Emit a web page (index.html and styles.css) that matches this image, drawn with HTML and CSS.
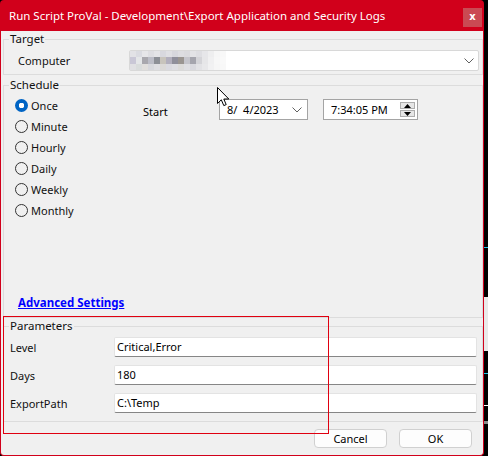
FILE: index.html
```html
<!DOCTYPE html>
<html>
<head>
<meta charset="utf-8">
<link rel="stylesheet" href="styles.css">
</head>
<body>
<div class="desktop">
  <div class="window">
    <div class="titlebar">
      <span class="title">Run Script ProVal - Development\Export Application and Security Logs</span>
      <div class="close">x</div>
    </div>
    <div class="client">
      <fieldset class="group target">
        <legend>Target</legend>
        <div class="target-row">
          <span class="lbl">Computer</span>
          <div class="combo">
            <div class="mosaic">
              <i style="background:#e2e2e6"></i><i style="background:#dadbe1"></i><i style="background:#e6e6e9"></i><i style="background:#dedee2"></i><i style="background:#e4e4e7"></i><i style="background:#d8d8de"></i><i style="background:#dfdfe3"></i><i style="background:#d7d7dd"></i><i style="background:#dddde1"></i><i style="background:#dadade"></i><i style="background:#e3e3e6"></i><i style="background:#dedee2"></i><i style="background:#e6e6e9"></i><i style="background:#eeeeef"></i><i style="background:#f6f6f6"></i><i style="background:#f8f8f8"></i>
              <i style="background:#c9c7d6"></i><i style="background:#e4e6e8"></i><i style="background:#a9a8ae"></i><i style="background:#bcbdc7"></i><i style="background:#8c8f96"></i><i style="background:#c8c4bc"></i><i style="background:#b2afbd"></i><i style="background:#8f8f9b"></i><i style="background:#9a9591"></i><i style="background:#c5c5cc"></i><i style="background:#a5a5ad"></i><i style="background:#d4d4d8"></i><i style="background:#e6e6e8"></i><i style="background:#f0f0f1"></i><i style="background:#f7f7f7"></i><i style="background:#f9f9f9"></i>
              <i style="background:#e0e0e3"></i><i style="background:#d9dcdc"></i><i style="background:#e1dfdd"></i><i style="background:#d7d8dd"></i><i style="background:#dedee2"></i><i style="background:#dbd9d7"></i><i style="background:#dadae0"></i><i style="background:#dedee3"></i><i style="background:#dcdbda"></i><i style="background:#dfdfe3"></i><i style="background:#d9d9de"></i><i style="background:#e2e2e5"></i><i style="background:#e8e8ea"></i><i style="background:#f1f1f2"></i><i style="background:#f6f6f6"></i><i style="background:#f8f8f8"></i>
            </div>
            <svg class="chev" width="10" height="6" viewBox="0 0 10 6"><path d="M0.5 0.5 L5 5 L9.5 0.5" fill="none" stroke="#606060" stroke-width="1"/></svg>
          </div>
        </div>
      </fieldset>

      <fieldset class="group schedule">
        <legend>Schedule</legend>
        <div class="sched-body">
          <div class="sched-top">
            <div class="radios">
              <div class="radio"><span class="dot checked"></span><span>Once</span></div>
              <div class="radio"><span class="dot"></span><span>Minute</span></div>
              <div class="radio"><span class="dot"></span><span>Hourly</span></div>
              <div class="radio"><span class="dot"></span><span>Daily</span></div>
              <div class="radio"><span class="dot"></span><span>Weekly</span></div>
              <div class="radio"><span class="dot"></span><span>Monthly</span></div>
            </div>
            <div class="start">
              <span class="start-lbl">Start</span>
              <div class="picker date">
                <span class="pick-text">8/&nbsp;&nbsp;4/2023</span>
                <svg class="chev" width="10" height="6" viewBox="0 0 10 6"><path d="M0.5 0.5 L5 5 L9.5 0.5" fill="none" stroke="#606060" stroke-width="1"/></svg>
              </div>
              <div class="picker time">
                <span class="pick-text">7:34:05 PM</span>
                <div class="spin">
                  <div class="spin-btn"><svg width="7" height="4" viewBox="0 0 7 4"><path d="M3.5 0 L7 4 L0 4 Z" fill="#000"/></svg></div>
                  <div class="spin-btn"><svg width="7" height="4" viewBox="0 0 7 4"><path d="M0 0 L7 0 L3.5 4 Z" fill="#000"/></svg></div>
                </div>
              </div>
            </div>
          </div>
          <a class="adv">Advanced Settings</a>
        </div>
      </fieldset>

      <fieldset class="group params">
        <legend>Parameters</legend>
        <div class="param-list">
          <div class="param"><span class="plbl">Level</span><div class="field">Critical,Error</div></div>
          <div class="param"><span class="plbl">Days</span><div class="field">180</div></div>
          <div class="param"><span class="plbl">ExportPath</span><div class="field">C:\Temp</div></div>
        </div>
      </fieldset>

      <div class="footer">
        <div class="btn">Cancel</div>
        <div class="btn">OK</div>
      </div>
    </div>
    <div class="annot"></div>
    <svg class="cursor" width="13" height="20" viewBox="0 0 13 20"><path d="M0.5 0.5 L0.5 16.5 L4.3 12.8 L6.8 18.6 L9.2 17.6 L6.8 12 L11.8 12 Z" fill="#fff" stroke="#000" stroke-width="1" stroke-linejoin="miter"/></svg>
  </div>
  <div class="strip">
    <div class="s-black h248"></div>
    <div class="s-cyan"></div>
    <div class="s-black h49"></div>
    <div class="s-light"></div>
    <div class="s-black h22"></div>
    <div class="s-cyan"></div>
    <div class="s-black h31"></div>
    <div class="s-white"></div>
    <div class="s-black h15"></div>
    <div class="s-gray"></div>
  </div>
</div>
</body>
</html>
```

FILE: styles.css
```css
html, body {
  margin: 0;
  padding: 0;
}
body {
  background: #000;
  width: 488px;
  height: 456px;
  overflow: hidden;
  font-family: "Noto Sans", "Open Sans", sans-serif;
  font-size: 11px;
  color: #000;
}
.desktop {
  display: flex;
  height: 456px;
}
.window {
  position: relative;
  width: 484px;
  height: 456px;
  display: flex;
  flex-direction: column;
  flex: none;
}
.titlebar {
  height: 31px;
  flex: none;
  background: #d1001b;
  border-radius: 4px 4px 0 0;
  display: flex;
  align-items: center;
  padding-left: 9px;
}
.title {
  flex: 1;
  color: #fff;
  font-size: 11.5px;
  white-space: nowrap;
}
.close {
  align-self: flex-start;
  margin-top: 8px;
  margin-right: 2px;
  width: 19px;
  height: 19px;
  background: #ca4a53;
  color: #fff;
  font-family: "DejaVu Sans", sans-serif;
  font-weight: bold;
  font-size: 10px;
  line-height: 17px;
  text-align: center;
}
.client {
  flex: 1;
  background: #f0f0f0;
  border: 1px solid #d1001b;
  border-top: none;
  border-radius: 0 0 4px 4px;
  display: flex;
  flex-direction: column;
}
.group {
  border: 1px solid #dcdcdc;
  margin: 0 0 0 2px;
  padding: 0;
  min-width: 0;
}
.group legend {
  padding: 0 1px;
  margin-left: 5px;
  height: 16px;
  line-height: 16px;
  font-size: 11.5px;
  color: #111;
}
.target-row {
  display: flex;
  align-items: center;
  padding: 3px 3px 3px 14px;
}
.lbl {
  flex: 1;
  color: #111;
}
.combo {
  width: 350px;
  height: 21px;
  box-sizing: border-box;
  background: #fff;
  border: 1px solid #d8d8d8;
  border-radius: 2px;
  display: flex;
  align-items: center;
  padding-right: 4px;
}
.mosaic {
  display: grid;
  grid-template-columns: repeat(14, 6px) 6px 6px;
  grid-template-rows: 6px 7px 6px;
}
.mosaic i {
  display: block;
}
.combo .chev {
  margin-left: auto;
}
.schedule {
  margin-top: 2px;
}
.sched-body {
  height: 224px;
  display: flex;
  flex-direction: column;
}
.sched-top {
  display: flex;
  margin-top: 2px;
}
.radios {
  width: 128px;
  padding-left: 11px;
  display: flex;
  flex-direction: column;
}
.radio {
  height: 21px;
  display: flex;
  align-items: center;
  gap: 3px;
  color: #111;
}
.dot {
  width: 13px;
  height: 13px;
  box-sizing: border-box;
  border: 1px solid #333;
  border-radius: 50%;
  flex: none;
}
.dot.checked {
  border: none;
  background: radial-gradient(circle, #fff 0 2.6px, #0064c4 3px);
}
.start {
  display: flex;
  align-items: flex-start;
}
.start-lbl {
  width: 76px;
  margin-top: 9px;
  line-height: 16px;
}
.picker {
  height: 21px;
  margin-top: 4px;
  box-sizing: border-box;
  background: #fff;
  border: 1px solid #a4a4a4;
  display: flex;
  align-items: center;
  padding-left: 7px;
}
.date {
  width: 89px;
  padding-right: 5px;
}
.date .chev {
  margin-left: auto;
}
.time {
  width: 95px;
  margin-left: 15px;
  padding-right: 2px;
}
.pick-text {
  white-space: pre;
}
.spin {
  margin-left: auto;
  display: flex;
  flex-direction: column;
  gap: 1px;
}
.spin-btn {
  width: 15px;
  height: 7px;
  box-sizing: border-box;
  background: #e6e6e6;
  border: 1px solid #adadad;
  display: flex;
  align-items: center;
  justify-content: center;
}
.adv {
  margin-top: auto;
  margin-left: 14px;
  margin-bottom: 6px;
  line-height: 16px;
  font-weight: bold;
  font-size: 11.5px;
  color: #0000ff;
  text-decoration: underline;
  align-self: flex-start;
}
.param-list {
  display: flex;
  flex-direction: column;
  gap: 8px;
  padding: 3px 5px 8px 6px;
}
.param {
  display: flex;
  align-items: center;
  height: 20px;
}
.plbl {
  width: 104px;
  color: #111;
}
.field {
  width: 363px;
  height: 20px;
  box-sizing: border-box;
  background: #fff;
  border: 1px solid #e3e3e3;
  border-bottom: 1px solid #868686;
  border-radius: 2px;
  padding-left: 2px;
  line-height: 17px;
  white-space: nowrap;
}
.footer {
  flex: 1;
  display: flex;
  justify-content: flex-end;
  align-items: flex-start;
  gap: 12px;
  padding: 7px 11px 0 0;
}
.btn {
  width: 73px;
  height: 19px;
  box-sizing: border-box;
  background: #fdfdfd;
  border: 1px solid #d0d0d0;
  border-radius: 4px;
  text-align: center;
  line-height: 17px;
}
.annot {
  position: absolute;
  left: 3px;
  top: 316px;
  width: 326px;
  height: 118px;
  box-sizing: border-box;
  border: 1px solid #e00010;
}
.cursor {
  position: absolute;
  left: 217px;
  top: 87px;
}
.strip {
  width: 4px;
  display: flex;
  flex-direction: column;
}
.s-black { background: #000; }
.h248 { height: 247px; }
.h49 { height: 49px; }
.h22 { height: 22px; }
.h31 { height: 31px; }
.h15 { height: 15px; }
.s-cyan { height: 1px; background: #23c4e8; }
.s-light { height: 54px; background: #e9e9e9; }
.s-white { height: 1px; background: #fff; }
.s-gray { height: 3px; background: #8a8a8a; }
```
